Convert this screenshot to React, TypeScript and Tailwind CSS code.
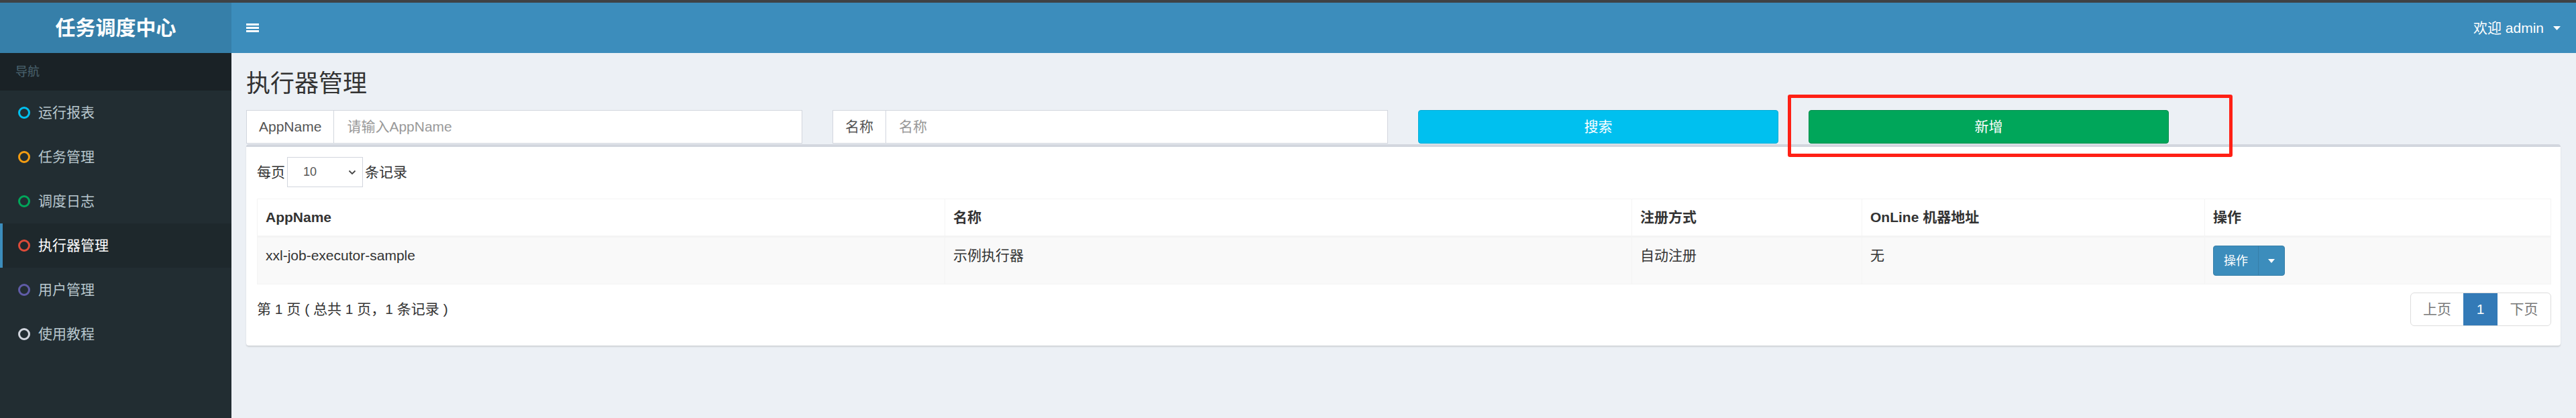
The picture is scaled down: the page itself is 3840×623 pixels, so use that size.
import React from 'react';

const font = "font-['Liberation_Sans','Noto_Sans_CJK_SC',sans-serif]";

interface NavItem {
  label: string;
  ring: string;
  active?: boolean;
}

const navItems: NavItem[] = [
  { label: '运行报表', ring: 'border-[#00c0ef]' },
  { label: '任务管理', ring: 'border-[#f39c12]' },
  { label: '调度日志', ring: 'border-[#00a65a]' },
  { label: '执行器管理', ring: 'border-[#dd4b39]', active: true },
  { label: '用户管理', ring: 'border-[#605ca8]' },
  { label: '使用教程', ring: 'border-[#d2d6de]' },
];

const Sidebar: React.FC = () => (
  <aside className="w-[345px] shrink-0 flex flex-col bg-[#222d32]">
    <div className="h-[75px] bg-[#367fa9] flex items-center justify-center text-white text-[30px] font-bold">
      任务调度中心
    </div>
    <div className="h-[56px] bg-[#1a2226] pl-[23px] flex items-center text-[18px] text-[#4b646f]">
      导航
    </div>
    <ul>
      {navItems.map((item) => (
        <li
          key={item.label}
          className={
            item.active
              ? 'h-[66px] flex items-center border-l-4 border-[#3c8dbc] bg-[#1e282c] pl-[23px] text-white text-[21px]'
              : 'h-[66px] flex items-center border-l-4 border-transparent pl-[23px] text-[#b8c7ce] text-[21px]'
          }
        >
          <span className={`w-[18px] h-[18px] rounded-full border-[3px] ${item.ring}`} />
          <span className="ml-[12px]">{item.label}</span>
        </li>
      ))}
    </ul>
  </aside>
);

const Header: React.FC = () => (
  <header className="h-[75px] bg-[#3c8dbc] flex items-center justify-between pl-[22px] pr-[23px] text-white">
    <div className="flex flex-col gap-[2px] w-[19px]">
      <span className="h-[3px] bg-white" />
      <span className="h-[3px] bg-white" />
      <span className="h-[3px] bg-white" />
    </div>
    <div className="flex items-center text-[21px]">
      <span>欢迎 admin</span>
      <svg className="ml-[14px]" width="11" height="6" viewBox="0 0 11 6">
        <path d="M0 0h11L5.5 6z" fill="#fff" />
      </svg>
    </div>
  </header>
);

const InputGroup: React.FC<{ label: string; placeholder: string; className: string }> = ({
  label,
  placeholder,
  className,
}) => (
  <div className={`h-[50px] flex border border-[#d2d6de] bg-white text-[21px] ${className}`}>
    <span className="px-[18px] flex items-center border-r border-[#d2d6de] text-[#555]">{label}</span>
    <span className="pl-[19px] flex items-center text-[#999]">{placeholder}</span>
  </div>
);

const App: React.FC = () => {
  return (
    <div className={`w-full h-[623px] overflow-hidden flex flex-col bg-[#ecf0f5] text-[#333] ${font}`}>
      <div className="h-[4px] bg-[#3f4245]" />
      <div className="flex flex-1 min-h-0">
        <Sidebar />
        <main className="flex-1 flex flex-col">
          <Header />
          <div className="pl-[22px] pr-[23px] pt-[26px]">
            <h1 className="text-[36px] leading-[40px] text-[#333]">执行器管理</h1>

            <div className="mt-[19px] flex gap-[45px]">
              <InputGroup label="AppName" placeholder="请输入AppName" className="w-[829px]" />
              <InputGroup label="名称" placeholder="名称" className="w-[828px]" />
              <button className="w-[537px] h-[50px] rounded-[4px] bg-[#00c0ef] border border-[#00acd6] text-white text-[21px]">
                搜索
              </button>
              <div className="relative w-[537px]">
                <button className="w-full h-[50px] rounded-[4px] bg-[#00a65a] border border-[#008d4c] text-white text-[21px]">
                  新增
                </button>
                <div className="absolute left-[-31px] top-[-23px] w-[663px] h-[93px] border-[5px] border-[#ff2015] rounded-[3px]" />
              </div>
            </div>

            <section className="mt-[1px] h-[300px] bg-white border-t-4 border-[#d2d6de] rounded-[4px] shadow-[0_2px_2px_rgba(0,0,0,0.12)] pl-[16px] pr-[14px] pt-[15px]">
              <div className="flex items-center text-[21px]">
                <span>每页</span>
                <div className="mx-[3px] w-[113px] h-[45px] border border-[#d2d6de] flex items-center justify-between pl-[23px] pr-[9px] text-[18px] text-[#555]">
                  <span>10</span>
                  <svg width="12" height="8" viewBox="0 0 12 8">
                    <path d="M1.5 1.5l4.5 4.5 4.5-4.5" fill="none" stroke="#444" strokeWidth="1.8" />
                  </svg>
                </div>
                <span>条记录</span>
              </div>

              <table className="mt-[17px] w-full table-fixed border-collapse text-[21px]">
                <colgroup>
                  <col className="w-[1025px]" />
                  <col className="w-[1024px]" />
                  <col className="w-[343px]" />
                  <col className="w-[511px]" />
                  <col />
                </colgroup>
                <thead>
                  <tr className="text-left font-bold">
                    <th className="border border-[#f4f4f4] border-b-[3px] px-[12px] py-[12px] leading-[30px]">AppName</th>
                    <th className="border border-[#f4f4f4] border-b-[3px] px-[12px] py-[12px] leading-[30px]">名称</th>
                    <th className="border border-[#f4f4f4] border-b-[3px] px-[12px] py-[12px] leading-[30px]">注册方式</th>
                    <th className="border border-[#f4f4f4] border-b-[3px] px-[12px] py-[12px] leading-[30px]">OnLine 机器地址</th>
                    <th className="border border-[#f4f4f4] border-b-[3px] px-[12px] py-[12px] leading-[30px]">操作</th>
                  </tr>
                </thead>
                <tbody>
                  <tr className="bg-[#f9f9f9] align-top">
                    <td className="border border-[#f4f4f4] px-[12px] py-[12px] leading-[30px]">xxl-job-executor-sample</td>
                    <td className="border border-[#f4f4f4] px-[12px] py-[12px] leading-[30px]">示例执行器</td>
                    <td className="border border-[#f4f4f4] px-[12px] py-[12px] leading-[30px]">自动注册</td>
                    <td className="border border-[#f4f4f4] px-[12px] py-[12px] leading-[30px]">无</td>
                    <td className="border border-[#f4f4f4] px-[12px] py-[12px] leading-[30px]">
                      <div className="flex h-[45px] w-[107px] rounded-[4px] overflow-hidden border border-[#367fa9] bg-[#3c8dbc] text-white text-[18px]">
                        <span className="w-[67px] flex items-center justify-center border-r border-[#367fa9]">操作</span>
                        <span className="flex-1 flex items-center justify-center">
                          <svg width="10" height="6" viewBox="0 0 10 6">
                            <path d="M0 0h10L5 6z" fill="#fff" />
                          </svg>
                        </span>
                      </div>
                    </td>
                  </tr>
                </tbody>
              </table>

              <div className="mt-[12px] h-[50px] flex items-center justify-between text-[21px]">
                <span>第 1 页 ( 总共 1 页，1 条记录 )</span>
                <div className="flex h-[50px] border border-[#ddd] rounded-[6px] overflow-hidden text-[#777]">
                  <span className="w-[78px] flex items-center justify-center">上页</span>
                  <span className="w-[51px] flex items-center justify-center bg-[#337ab7] text-white">1</span>
                  <span className="w-[79px] flex items-center justify-center">下页</span>
                </div>
              </div>
            </section>
          </div>
        </main>
      </div>
    </div>
  );
};

export default App;
